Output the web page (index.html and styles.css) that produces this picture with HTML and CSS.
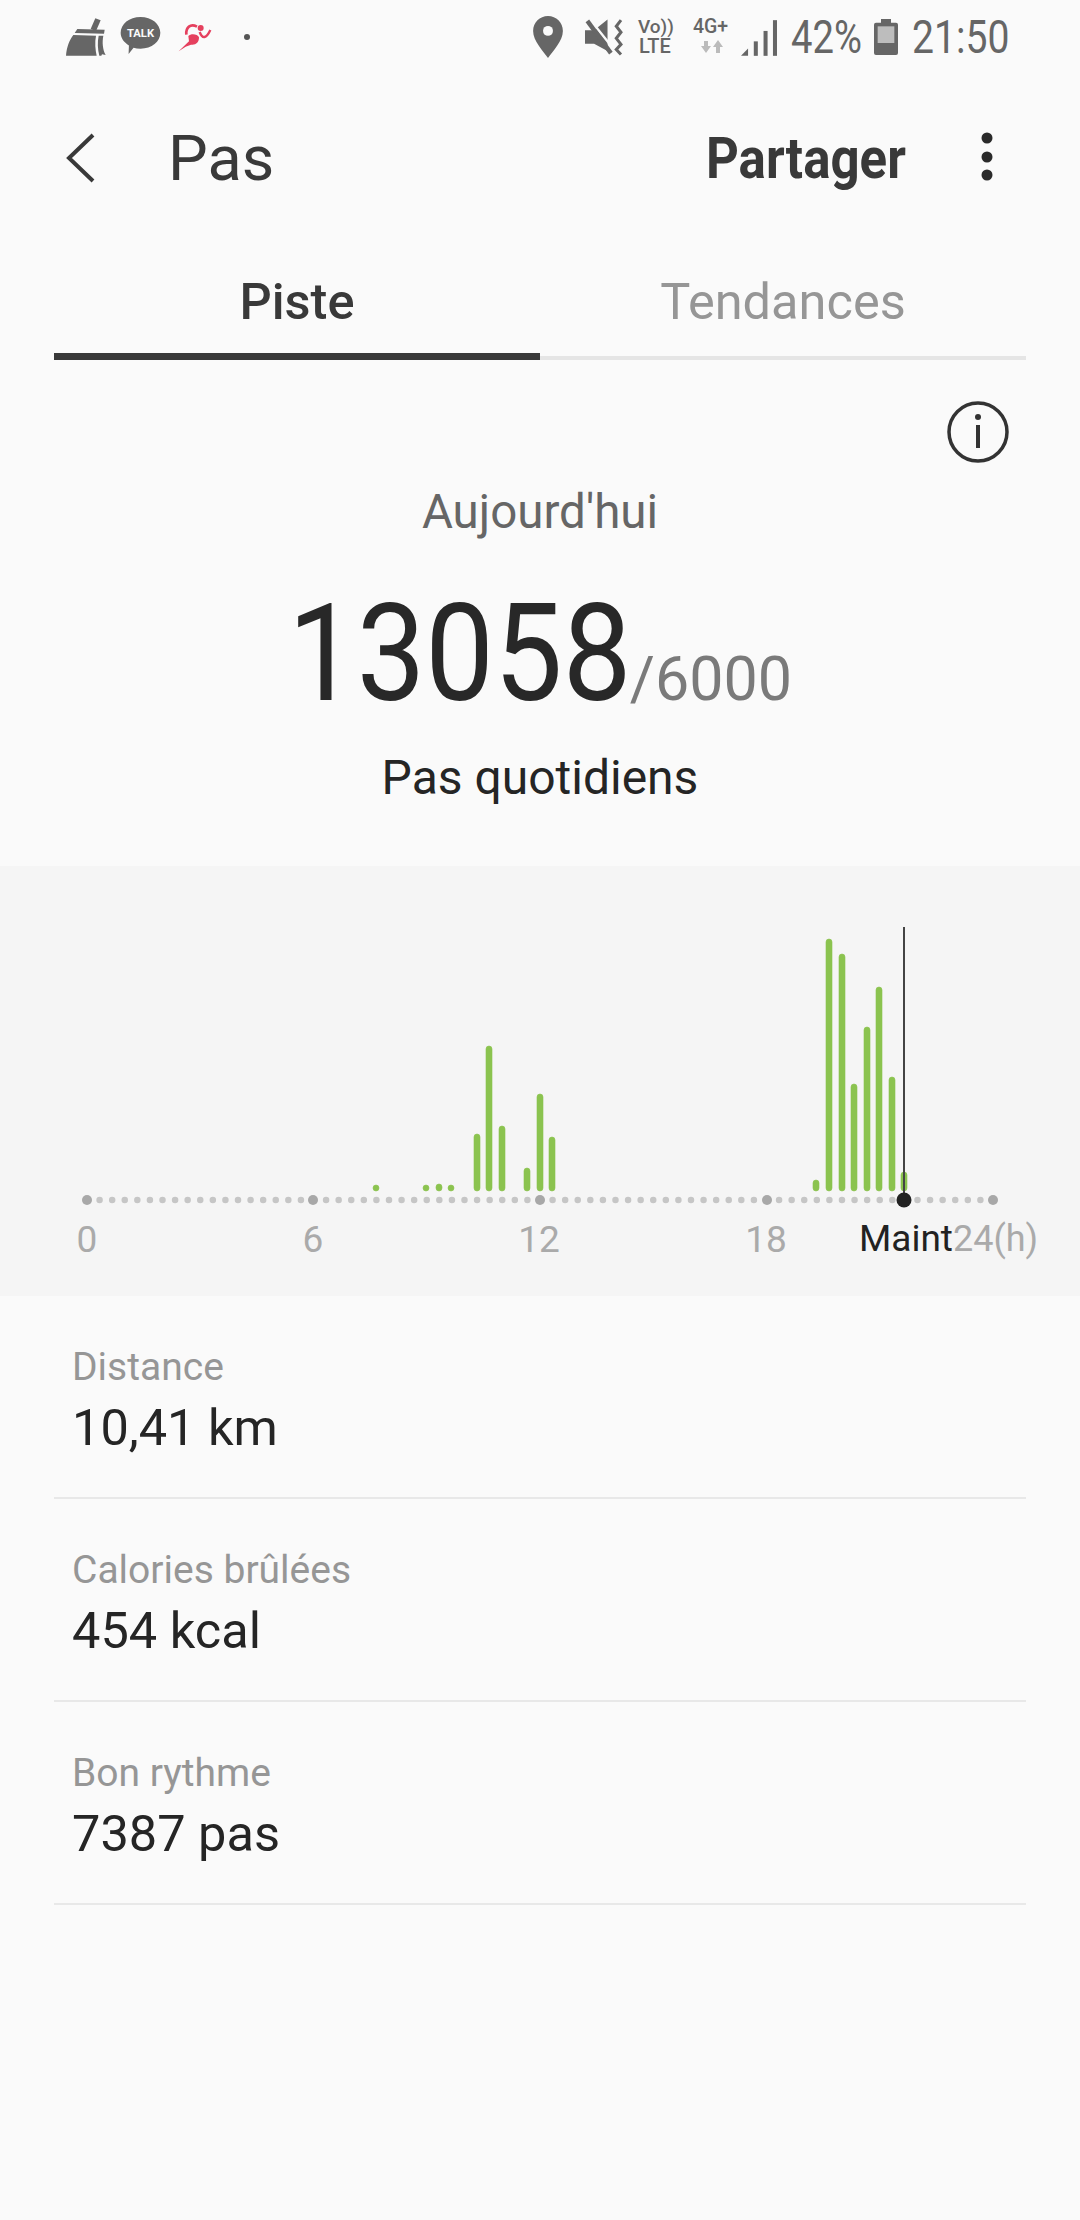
FILE: index.html
```html
<!DOCTYPE html>
<html lang="fr">
<head>
    <meta charset="UTF-8">
    <meta name="viewport" content="width=device-width, initial-scale=1.0">
    <title>Pas</title>
    <link rel="stylesheet" href="styles.css">
</head>
<body>
    <!-- Status bar -->
    <div class="status-bar">
        <div class="status-left">
            <svg class="icon-broom" viewBox="78 50 120 120">
                <path d="M166 54 L182 60 L168 92 L152 86 Z" fill="#666"/>
                <path d="M112 86 L194 88 L192 100 L104 98 Z" fill="#666"/>
                <path d="M100 104 L168 106 C164 125 166 148 170 166 L78 166 C80 140 88 120 100 104 Z" fill="#666"/>
                <path d="M176 106 L190 106 C186 125 188 148 197 164 L186 162 L184 166 L178 166 C173 146 172 125 176 106 Z" fill="#666"/>
            </svg>
            <svg class="icon-talk" viewBox="238 50 124 116">
                <path d="M300 52 C334 52 360 73 360 100 C360 127 334 148 300 148 C292 148 285 147 279 145 L264 164 L265 138 C250 129 240 116 240 100 C240 73 266 52 300 52 Z" fill="#666"/>
                <text class="talk-text" x="300" y="114" text-anchor="middle">TALK</text>
            </svg>
            <svg class="icon-runner" viewBox="414 62 100 90">
                <circle cx="481" cy="80" r="9" fill="#e5405e"/>
                <path d="M438 100 C436 78 450 66 470 76" fill="none" stroke="#e5405e" stroke-width="8"/>
                <path d="M415 150 L446 120 L444 104 C452 96 472 98 476 108 C476 124 466 132 452 130 L436 136 Z" fill="#e5405e"/>
                <path d="M478 92 C486 114 498 112 510 86" fill="none" stroke="#e5405e" stroke-width="7"/>
            </svg>
            <span class="status-dot"></span>
        </div>
        <div class="status-right">
            <svg class="icon-pin" viewBox="70 45 90 127">
                <path d="M115 45 C140 45 160 65 160 90 C160 120 130 150 115 172 C100 150 70 120 70 90 C70 65 90 45 115 45 Z" fill="#666"/>
                <circle cx="115" cy="90" r="15" fill="#fafafa"/>
            </svg>
            <svg class="icon-mute" viewBox="225 55 113 106">
                <path d="M225 88 L252 88 L292 56 L292 150 L252 128 L225 128 Z" fill="#666"/>
                <path d="M226 52 L312 160" stroke="#fafafa" stroke-width="7" transform="translate(7 -5)"/>
                <path d="M232 60 L302 156" stroke="#666" stroke-width="13"/>
                <path d="M332 58 L318 76 L332 94 L318 112 L332 130 L318 145 L332 160" fill="none" stroke="#666" stroke-width="9"/>
            </svg>
            <svg class="icon-volte" viewBox="0 0 37 38">
                <text class="volte-text" x="0" y="15">Vo))</text>
                <text class="volte-lte" x="1" y="35">LTE</text>
            </svg>
            <svg class="icon-net" viewBox="0 0 39 38">
                <text class="net-text" x="0" y="15">4G+</text>
                <path d="M13 35 L8 28 L11 28 L11 23 L15 23 L15 28 L18 28 Z" fill="#bbb"/>
                <path d="M25 22 L30 29 L27 29 L27 35 L23 35 L23 29 L20 29 Z" fill="#bbb"/>
            </svg>
            <svg class="icon-signal" viewBox="692 52 107 106">
                <path d="M692 158 L713 136 L713 158 Z" fill="#666"/>
                <rect x="730" y="115" width="12" height="43" fill="#666"/>
                <rect x="759" y="84" width="12" height="74" fill="#666"/>
                <rect x="787" y="52" width="12" height="106" fill="#666"/>
            </svg>
            <span class="status-text pct"><span class="squeeze">42%</span></span>
            <svg class="icon-battery" viewBox="1092 54 72 108">
                <path d="M1113 54 L1143 54 L1143 65 L1158 65 Q1164 65 1164 71 L1164 156 Q1164 162 1158 162 L1098 162 Q1092 162 1092 156 L1092 71 Q1092 65 1098 65 L1113 65 Z" fill="#666"/>
                <rect x="1103" y="76" width="50" height="50" fill="#bdbdbd"/>
            </svg>
            <span class="status-text time"><span class="squeeze time-inner">21:50</span></span>
        </div>
    </div>

    <!-- App bar -->
    <header class="app-bar">
        <svg class="icon-back" viewBox="0 0 30 52">
            <path d="M27 3 L3 26 L27 49" fill="none" stroke="#393939" stroke-width="4"/>
        </svg>
        <h1 class="title">Pas</h1>
        <span class="share"><span class="share-inner">Partager</span></span>
        <svg class="icon-more" viewBox="0 0 12 50">
            <circle cx="6" cy="6" r="5.5" fill="#2a2a2a"/>
            <circle cx="6" cy="25" r="5.5" fill="#2a2a2a"/>
            <circle cx="6" cy="43" r="5.5" fill="#2a2a2a"/>
        </svg>
    </header>

    <!-- Tabs -->
    <nav class="tabs">
        <div class="tab active">Piste</div>
        <div class="tab">Tendances</div>
    </nav>

    <div class="info-row">
        <svg class="icon-info" viewBox="0 0 64 64">
            <circle cx="32" cy="32" r="29" fill="none" stroke="#333" stroke-width="3.5"/>
            <circle cx="32" cy="17" r="3" fill="#333"/>
            <rect x="30" y="25" width="4" height="23" fill="#333"/>
        </svg>
    </div>

    <!-- Summary -->
    <section class="summary">
        <div class="summary-day">Aujourd'hui</div>
        <div class="summary-count">
            <span class="count-now"><span class="count-inner">13058</span></span>
            <span class="count-goal">/6000</span>
        </div>
        <div class="summary-label">Pas quotidiens</div>
    </section>

    <!-- Hourly chart -->
    <section class="chart">
        <svg class="chart-svg" viewBox="0 0 1080 430">
            <line class="axis-dots" x1="87" y1="334" x2="993" y2="334"/>
            <circle class="axis-major" cx="87" cy="334" r="5"/>
            <circle class="axis-major" cx="313" cy="334" r="5"/>
            <circle class="axis-major" cx="540" cy="334" r="5"/>
            <circle class="axis-major" cx="767" cy="334" r="5"/>
            <circle class="axis-major" cx="993" cy="334" r="5"/>

            <rect class="bar" x="373" y="319" width="6" height="6"/>
            <rect class="bar" x="423" y="319" width="6" height="6"/>
            <rect class="bar" x="436" y="318" width="6" height="7"/>
            <rect class="bar" x="448" y="319" width="6" height="6"/>
            <rect class="bar" x="474" y="268" width="6" height="57"/>
            <rect class="bar" x="486" y="180" width="6" height="145"/>
            <rect class="bar" x="499" y="260" width="6" height="65"/>
            <rect class="bar" x="524" y="302" width="6" height="23"/>
            <rect class="bar" x="537" y="228" width="6" height="97"/>
            <rect class="bar" x="549" y="271" width="6" height="54"/>
            <rect class="bar" x="813" y="314" width="6" height="11"/>
            <rect class="bar" x="826" y="73" width="6" height="252"/>
            <rect class="bar" x="839" y="88" width="6" height="237"/>
            <rect class="bar" x="851" y="218" width="6" height="107"/>
            <rect class="bar" x="864" y="161" width="6" height="164"/>
            <rect class="bar" x="876" y="121" width="6" height="204"/>
            <rect class="bar" x="889" y="211" width="6" height="114"/>
            <rect class="bar" x="901" y="306" width="6" height="19"/>

            <line class="now-line" x1="904" y1="61" x2="904" y2="330"/>
            <circle class="now-dot" cx="904" cy="334" r="7.5"/>

            <text class="tick" x="87" y="386" text-anchor="middle">0</text>
            <text class="tick" x="313" y="386" text-anchor="middle">6</text>
            <text class="tick" x="539" y="386" text-anchor="middle">12</text>
            <text class="tick" x="766" y="386" text-anchor="middle">18</text>
            <text class="tick tick-now" x="859" y="385">Maint</text>
            <text class="tick tick-end" x="953" y="385">24(h)</text>
        </svg>
    </section>

    <!-- Details -->
    <section class="details">
        <div class="detail-row">
            <div class="detail-label">Distance</div>
            <div class="detail-value">10,41 km</div>
        </div>
        <div class="detail-row">
            <div class="detail-label">Calories brûlées</div>
            <div class="detail-value">454 kcal</div>
        </div>
        <div class="detail-row">
            <div class="detail-label">Bon rythme</div>
            <div class="detail-value">7387 pas</div>
        </div>
    </section>
</body>
</html>
```

FILE: styles.css
```css
/* Reset and Base Styles */
* {
    margin: 0;
    padding: 0;
    box-sizing: border-box;
    font-family: Roboto, "Liberation Sans", sans-serif;
}
body {
    background-color: #fafafa;
    color: #252525;
    width: 1080px;
    height: 2220px;
    overflow: hidden;
}
svg {
    display: block;
    flex: none;
    overflow: visible;
}

/* Status bar */
.status-bar {
    display: flex;
    justify-content: space-between;
    align-items: center;
    height: 74px;
    padding: 0 72px 0 66px;
}
.status-left, .status-right {
    display: flex;
    align-items: center;
}
.icon-broom { width: 40px; height: 40px; }
.icon-talk { width: 41px; height: 39px; margin-left: 14px; margin-top: -3px; }
.icon-runner { width: 34px; height: 30px; margin-left: 17px; }
.talk-text {
    font-size: 34px;
    font-weight: 700;
    fill: #fafafa;
}
.status-dot {
    width: 6px;
    height: 6px;
    margin-left: 32px;
    border-radius: 50%;
    background: #555;
}
.icon-pin { width: 30px; height: 42px; }
.icon-mute { width: 38px; height: 36px; margin-left: 22px; }
.icon-volte { width: 37px; height: 38px; margin-left: 15px; }
.icon-net { width: 39px; height: 38px; margin-left: 18px; }
.icon-signal { width: 36px; height: 36px; margin-left: 9px; margin-top: 2px; }
.icon-battery { width: 24px; height: 36px; margin-left: 13px; }
.volte-text {
    font-size: 19px;
    font-weight: 500;
    fill: #666;
}
.volte-lte {
    font-size: 20px;
    font-weight: 500;
    fill: #666;
}
.net-text {
    font-size: 19.5px;
    font-weight: 500;
    fill: #666;
}
.status-text {
    display: block;
    font-size: 46px;
    line-height: 54px;
    color: #666;
    white-space: nowrap;
}
.pct { width: 70px; margin-left: 14px; }
.time { width: 96px; margin-left: 14px; }
.squeeze {
    display: inline-block;
    transform: scaleX(0.83);
    transform-origin: left;
}
.time-inner { transform: scaleX(0.85); }

/* App bar */
.app-bar {
    display: flex;
    align-items: center;
    height: 168px;
    padding-left: 66px;
}
.icon-back { width: 30px; height: 52px; }
.title {
    font-size: 63px;
    font-weight: 400;
    color: #393939;
    margin-left: 72px;
    flex: 1;
}
.share {
    display: block;
    width: 199px;
    font-size: 58px;
    font-weight: 700;
    color: #393939;
    white-space: nowrap;
}
.share-inner {
    display: inline-block;
    transform: scaleX(0.88);
    transform-origin: left;
}
.icon-more { width: 12px; height: 50px; margin-left: 76px; margin-right: 87px; margin-top: -2px; }

/* Tabs */
.tabs {
    display: flex;
    margin: 0 54px;
    height: 118px;
}
.tab {
    flex: 1;
    display: flex;
    justify-content: center;
    align-items: center;
    padding-top: 4px;
    font-size: 50.5px;
    color: #969696;
    border-bottom: 4px solid #e5e5e5;
}
.tab.active {
    padding-top: 7px;
    font-weight: 500;
    color: #393939;
    border-bottom: 7px solid #393939;
}

.info-row {
    display: flex;
    justify-content: flex-end;
    padding: 40px 70px 0 0;
}
.icon-info { width: 64px; height: 64px; }

/* Summary */
.summary {
    text-align: center;
    padding-top: 20px;
}
.summary-day {
    font-size: 47.5px;
    line-height: 56px;
    color: #666;
}
.summary-count {
    display: flex;
    justify-content: center;
    align-items: baseline;
    margin-top: 34px;
    height: 160px;
}
.count-now {
    display: block;
    width: 342px;
    font-size: 135px;
    line-height: 160px;
    color: #282828;
    text-align: left;
    white-space: nowrap;
}
.count-inner {
    display: inline-block;
    transform: scaleX(0.905);
    transform-origin: left;
}
.count-goal {
    font-size: 61px;
    color: #7a7a7a;
}
.summary-label {
    margin-top: 16px;
    font-size: 48px;
    line-height: 56px;
    color: #252525;
}

/* Chart */
.chart {
    margin-top: 60px;
    height: 430px;
    background-color: #f5f5f5;
}
.chart-svg {
    width: 1080px;
    height: 430px;
}
.axis-dots {
    stroke: #c6c6c6;
    stroke-width: 6.5;
    stroke-linecap: round;
    stroke-dasharray: 0 12.583;
}
.axis-major { fill: #a8a8a8; }
.bar {
    fill: #8bc34f;
    stroke: #8bc34f;
    stroke-width: 0.6;
    rx: 3px;
}
.now-line {
    stroke: #444;
    stroke-width: 2;
}
.now-dot { fill: #222; }
.tick {
    font-size: 37px;
    fill: #aaa;
}
.tick-now { fill: #222; }
.tick-end { font-size: 36px; }

/* Details */
.details {
    margin: 0 54px;
}
.detail-row {
    height: 203px;
    padding: 48px 0 0 18px;
    border-bottom: 2px solid #e8e8e8;
}
.detail-label {
    font-size: 39px;
    line-height: 46px;
    color: #969696;
}
.detail-value {
    margin-top: 8px;
    font-size: 50.5px;
    line-height: 60px;
    color: #252525;
}
```
